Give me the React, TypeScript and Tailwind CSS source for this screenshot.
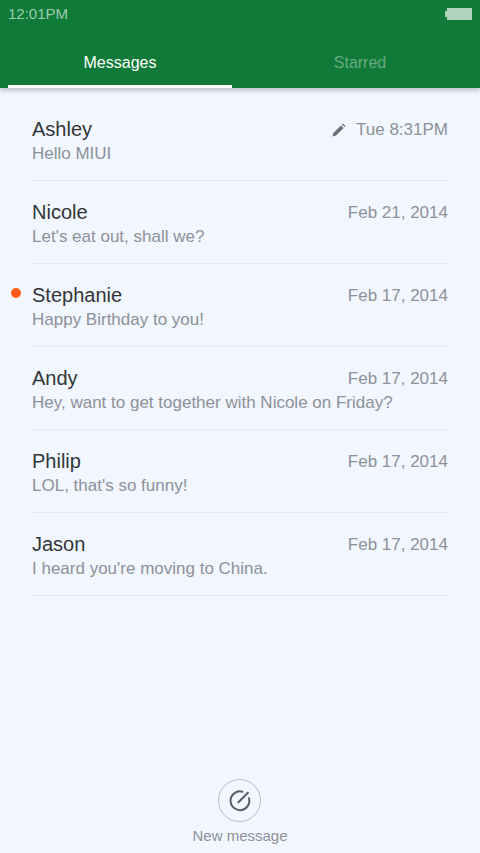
import clsx from 'clsx';
import { useState } from 'react';

const tabs = ['Messages', 'Starred'];

const threads = [
  { name: 'Ashley', text: 'Hello MIUI', date: 'Tue 8:31PM', draft: true },
  { name: 'Nicole', text: "Let's eat out, shall we?", date: 'Feb 21, 2014' },
  { name: 'Stephanie', text: 'Happy Birthday to you!', date: 'Feb 17, 2014', unread: true },
  { name: 'Andy', text: 'Hey, want to get together with Nicole on Friday?', date: 'Feb 17, 2014' },
  { name: 'Philip', text: "LOL, that's so funny!", date: 'Feb 17, 2014' },
  { name: 'Jason', text: "I heard you're moving to China.", date: 'Feb 17, 2014' },
];

function Battery() {
  return (
    <svg width="27" height="12" viewBox="0 0 27 12" fill="#b0d3bd" aria-hidden="true">
      <path d="M2 0h25v12H2V9H0V3h2z" />
    </svg>
  );
}

function Pencil() {
  return (
    <svg width="14" height="14" viewBox="0 0 14 14" fill="#6b6d72" aria-hidden="true">
      <path d="M0.4 13.6 1.4 9.9 9 2.4 11.6 5 4 12.5zM10 1.4l.9-.9 2.6 2.6-.9.9z" />
    </svg>
  );
}

function Compose() {
  return (
    <svg
      width="22"
      height="22"
      viewBox="0 0 22 22"
      fill="none"
      stroke="#5c5e61"
      strokeWidth="2"
      strokeLinecap="round"
      aria-hidden="true"
    >
      <path d="M13.4 1.7A9.4 9.4 0 1 0 20 8.3" />
      <path d="M9.4 12.2 18.9 2.7" />
    </svg>
  );
}

export default function App() {
  const [active, setActive] = useState('Messages');

  return (
    <div className="flex min-h-screen flex-col bg-[#f1f6ff] font-['Liberation_Sans',Arial,sans-serif]">
      <header className="bg-[#107b38] shadow-[0_3px_4px_rgba(60,60,80,0.25)]">
        <div className="flex h-7 items-center justify-between px-2 text-[15px] text-[#9dcbae]">
          <span>12:01PM</span>
          <Battery />
        </div>
        <nav className="grid grid-cols-2">
          {tabs.map((tab) => (
            <button
              key={tab}
              type="button"
              onClick={() => setActive(tab)}
              className={clsx(
                'mx-2 h-[60px] border-b-3 pt-3 text-base',
                active === tab ? 'border-white text-white' : 'border-transparent text-[#69aa80]'
              )}
            >
              {tab}
            </button>
          ))}
        </nav>
      </header>

      <main className="flex-1 px-8 pt-[10px]">
        <ul>
          {threads.map((t) => (
            <li key={t.name} className="relative border-b border-[#e3e8f0]">
              {t.unread && (
                <span className="absolute top-[24px] -left-[21px] size-[10px] rounded-full bg-[#ff5a17]" />
              )}
              <button type="button" className="block w-full pt-[19px] pb-[14px] text-left">
                <span className="flex items-center justify-between leading-[25px]">
                  <span className="text-xl leading-[25px] text-[#333539]">{t.name}</span>
                  <span className="flex items-center gap-[10px] text-[17px] text-[#8e9198]">
                    {t.draft && <Pencil />}
                    {t.date}
                  </span>
                </span>
                <span className="block text-[17px] leading-6 text-[#8e9198]">{t.text}</span>
              </button>
            </li>
          ))}
        </ul>
      </main>

      <footer className="flex justify-center pb-[7px]">
        <button type="button" className="flex flex-col items-center gap-1 text-[15px] leading-5 text-[#8e9198]">
          <span className="flex size-[43px] items-center justify-center rounded-full border border-[#b8bbc2]">
            <Compose />
          </span>
          New message
        </button>
      </footer>
    </div>
  );
}
